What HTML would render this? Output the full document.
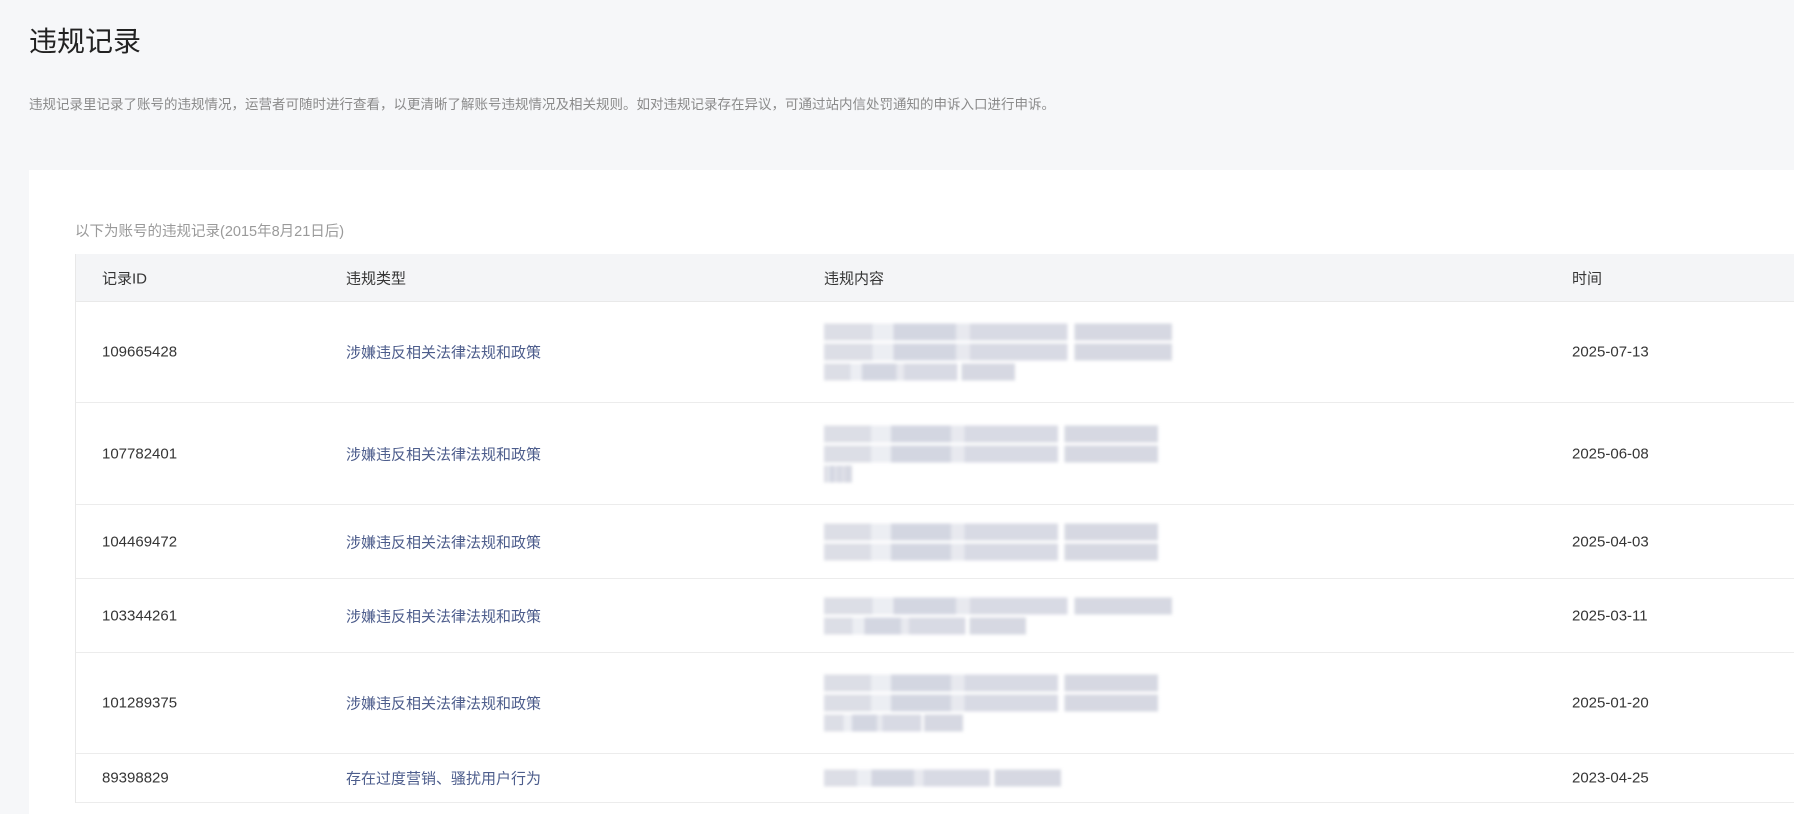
<!DOCTYPE html>
<html><head><meta charset="utf-8">
<style>
*{margin:0;padding:0;box-sizing:border-box}
body{width:1794px;height:814px;overflow:hidden;background:#f6f7f9;font-family:"Liberation Sans","Noto Sans CJK SC",sans-serif;color:#353535;position:relative}
.t{position:absolute;left:29px;top:20px;font-size:28px;color:#222}
.d{position:absolute;left:29px;top:93px;font-size:13.5px;color:#8a8a8a}
.card{position:absolute;left:29px;top:170px;right:0;bottom:0;background:#fff}
.sub{position:absolute;left:75px;top:220px;font-size:14.5px;color:#9a9a9a}
.tb{position:absolute;left:75px;top:254px;right:0;border-left:1px solid #e8e8e8}
.h{height:48px;background:#f4f5f7;border-bottom:1px solid #e9e9e9;position:relative;font-size:15px}
.r{position:relative;border-bottom:1px solid #ececec;font-size:15px}
.c{position:absolute;top:50%;transform:translateY(-50%);white-space:nowrap}
.c1{left:26px}.c2{left:270px}.c3{left:748px}.c4{left:1496px}
.r .c2{color:#4d5d8c}
.blur{position:absolute;left:748px;top:50%;transform:translateY(-50%);width:348px;filter:blur(1.5px)}
.ln{height:17px;margin:3px 0;background:linear-gradient(90deg,#dcdee6 0 14%,#eceef3 14% 20%,#d3d6e1 20% 38%,#e8e9ef 38% 42%,#d8dae4 42% 70%,#fff 70% 72%,#d6d8e2 72%)}
</style></head><body>
<div class="t">违规记录</div>
<div class="d">违规记录里记录了账号的违规情况，运营者可随时进行查看，以更清晰了解账号违规情况及相关规则。如对违规记录存在异议，可通过站内信处罚通知的申诉入口进行申诉。</div>
<div class="card"></div>
<div class="sub">以下为账号的违规记录(2015年8月21日后)</div>
<div class="tb">
<div class="h"><span class="c c1">记录ID</span><span class="c c2">违规类型</span><span class="c c3">违规内容</span><span class="c c4">时间</span></div>
<div class="r" style="height:101px"><span class="c c1">109665428</span><span class="c c2">涉嫌违反相关法律法规和政策</span><div class="blur"><div class="ln"></div><div class="ln"></div><div class="ln" style="width:55%"></div></div><span class="c c4">2025-07-13</span></div>
<div class="r" style="height:102px"><span class="c c1">107782401</span><span class="c c2">涉嫌违反相关法律法规和政策</span><div class="blur"><div class="ln" style="width:96%"></div><div class="ln" style="width:96%"></div><div class="ln" style="width:8%"></div></div><span class="c c4">2025-06-08</span></div>
<div class="r" style="height:74px"><span class="c c1">104469472</span><span class="c c2">涉嫌违反相关法律法规和政策</span><div class="blur"><div class="ln" style="width:96%"></div><div class="ln" style="width:96%"></div></div><span class="c c4">2025-04-03</span></div>
<div class="r" style="height:74px"><span class="c c1">103344261</span><span class="c c2">涉嫌违反相关法律法规和政策</span><div class="blur"><div class="ln"></div><div class="ln" style="width:58%"></div></div><span class="c c4">2025-03-11</span></div>
<div class="r" style="height:101px"><span class="c c1">101289375</span><span class="c c2">涉嫌违反相关法律法规和政策</span><div class="blur"><div class="ln" style="width:96%"></div><div class="ln" style="width:96%"></div><div class="ln" style="width:40%"></div></div><span class="c c4">2025-01-20</span></div>
<div class="r" style="height:49px"><span class="c c1">89398829</span><span class="c c2">存在过度营销、骚扰用户行为</span><div class="blur"><div class="ln" style="width:68%"></div></div><span class="c c4">2023-04-25</span></div>
</div>
</body></html>
